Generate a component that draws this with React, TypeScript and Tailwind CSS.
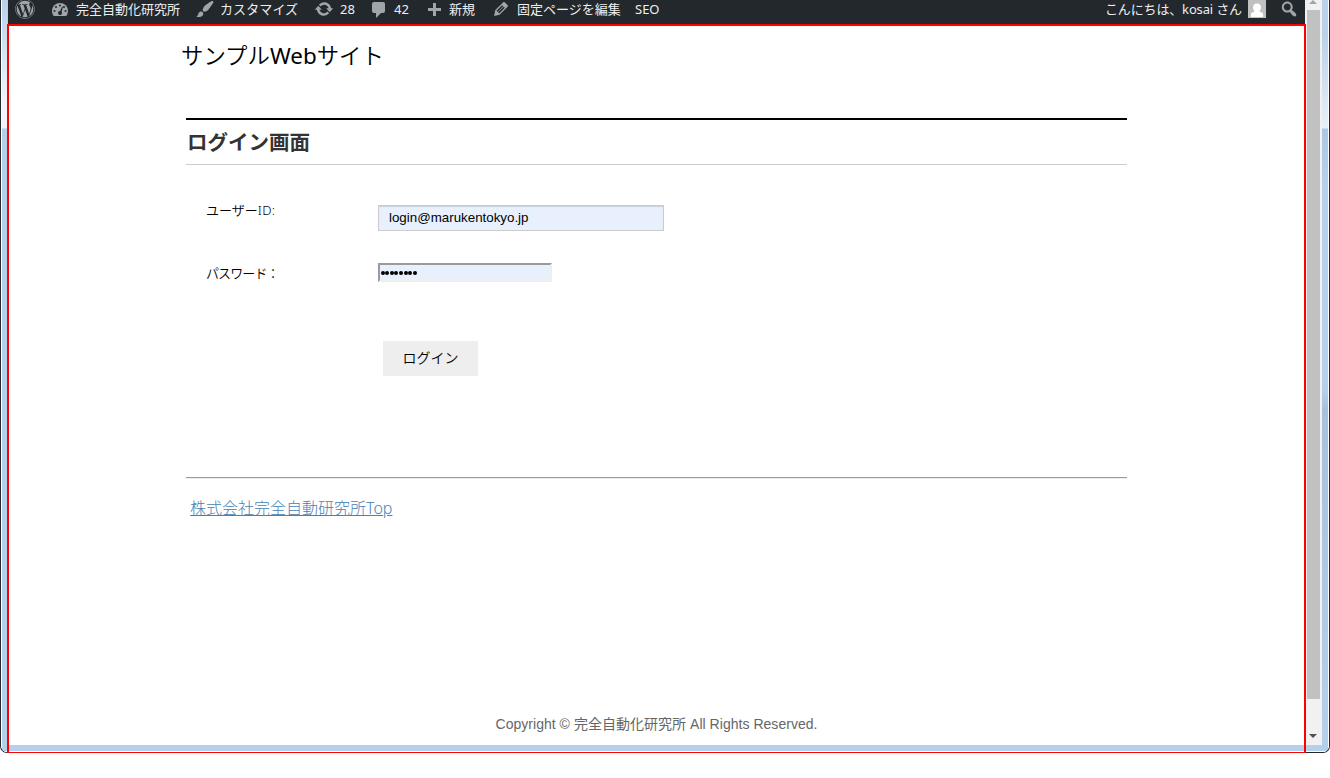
import React from 'react';
import { FaWordpress } from 'react-icons/fa';

const Icon = ({ d, className = '' }: { d: string; className?: string }) => (
  <svg viewBox="0 0 20 20" className={`size-5 shrink-0 ${className}`} fill="#a0a5aa">
    <path d={d} />
  </svg>
);

const BRUSH =
  'M18.33 3.57s.27-.8-.31-1.36c-.53-.52-1.22-.24-1.22-.24-.61.3-5.76 3.47-7.67 5.57-.86.96-2.06 3.79-1.09 4.82.92.98 3.96-.17 4.79-1 2.06-2.06 5.21-7.17 5.5-7.79zM1.4 17.65c2.37-1.56 1.46-3.41 3.23-4.64.93-.65 2.22-.62 3.08.29.63.67.8 2.57-.16 3.46-1.57 1.45-4 1.55-6.15.89z';
const UPDATE =
  'M10.2 3.28c3.53 0 6.43 2.61 6.92 6h2.08l-3.5 4-3.5-4h2.32c-.45-1.97-2.21-3.45-4.32-3.45-1.45 0-2.73.71-3.54 1.78L4.95 5.66C6.23 4.2 8.11 3.28 10.2 3.28zm-.4 13.44c-3.52 0-6.43-2.61-6.92-6H.8l3.5-4c1.17 1.33 2.33 2.67 3.5 4H5.48c.45 1.97 2.21 3.45 4.32 3.45 1.45 0 2.73-.71 3.54-1.78l1.71 1.95c-1.28 1.46-3.15 2.38-5.25 2.38z';
const COMMENT =
  'M5 2h9c1.1 0 2 .9 2 2v7c0 1.1-.9 2-2 2h-2l-5 5v-5H5c-1.1 0-2-.9-2-2V4c0-1.1.9-2 2-2z';
const PLUS = 'M17 7v3h-5v5H9v-5H4V7h5V2h3v5h5z';
const EDIT =
  'M13.89 3.39l2.71 2.72c.46.46.42 1.24.03 1.64l-8.01 8.02-5.56 1.16 1.16-5.58s7.6-7.63 7.99-8.03c.39-.39 1.22-.39 1.68.07zm-2.73 2.79l-5.59 5.61 1.11 1.11 5.54-5.65zm-2.97 8.23l5.58-5.6-1.07-1.08-5.59 5.6z';
const SEARCH =
  'M12.14 4.18c1.87 1.87 2.11 4.75.72 6.89.12.1.22.21.36.31.2.16.47.36.81.59.34.24.56.39.66.47.42.31.73.57.94.78.32.32.6.65.84 1 .25.35.44.69.59 1.04.14.35.21.68.18 1-.02.32-.14.59-.36.81s-.49.34-.81.36c-.31.02-.65-.04-.99-.19-.35-.14-.7-.34-1.04-.59-.35-.24-.68-.52-1-.84-.21-.21-.47-.52-.77-.93-.1-.13-.25-.35-.47-.66-.22-.32-.4-.57-.56-.78-.16-.2-.29-.35-.44-.5-2.07 1.09-4.69.76-6.44-.98-2.14-2.15-2.14-5.64 0-7.78 2.15-2.15 5.63-2.15 7.78 0zm-1.41 6.36c1.36-1.37 1.36-3.58 0-4.95-1.37-1.37-3.59-1.37-4.95 0-1.37 1.37-1.37 3.58 0 4.95 1.36 1.37 3.58 1.37 4.95 0z';

const Gauge = () => (
  <svg viewBox="0 0 20 20" className="size-5 shrink-0">
    <path fill="#a0a5aa" d="M3.76 16h12.48A8.4 8.4 0 0 0 18 11a8 8 0 0 0-16 0c0 1.9.7 3.700 1.760 5z" />
    <g fill="#23282d">
      <circle cx="10" cy="5.500" r="1" />
      <circle cx="6" cy="7" r="1" />
      <circle cx="14" cy="7" r="1" />
      <circle cx="4.5" cy="11" r="1" />
      <circle cx="15.5" cy="11" r="1" />
      <path d="M12.2 6.6l.7.3-1.3 5a1.9 1.9 0 1 1-1.6-.8z" />
    </g>
  </svg>
);

const AdminBar = () => (
  <header className="flex h-6 shrink-0 bg-[#23282d] pr-[5px] pl-[7px] text-[13px] leading-[18px] whitespace-nowrap text-[#eee]">
    <div className="flex w-[35px]">
      <FaWordpress className="-mt-px size-5 text-[#a0a5aa]" />
    </div>
    <div className="flex w-[145px] gap-[6px]">
      <Gauge />
      <span>完全自動化研究所</span>
    </div>
    <div className="flex w-[119px] gap-[5px]">
      <Icon d={BRUSH} className="-mt-px" />
      <span className="tracking-[0.1px]">カスタマイズ</span>
    </div>
    <div className="flex w-[55px] gap-[6px]">
      <Icon d={UPDATE} className="-mt-px" />
      <span>28</span>
    </div>
    <div className="flex w-[55px] gap-[5px]">
      <Icon d={COMMENT} />
      <span>42</span>
    </div>
    <div className="flex w-[67px] gap-[5px]">
      <Icon d={PLUS} className="mt-px" />
      <span>新規</span>
    </div>
    <div className="flex w-[144px] gap-[6px]">
      <Icon d={EDIT} className="-mt-px" />
      <span>固定ページを編集</span>
    </div>
    <span>SEO</span>
    <div className="ml-auto flex">
      <span className="w-[143px] tracking-[-0.15px]">こんにちは、kosai さん</span>
      <svg viewBox="0 0 18 18" className="mr-[13px] size-[18px]">
        <path fill="#c0c0c0" d="M0 0h18v18H0z" />
        <path
          fill="#fff"
          d="M9 3.500a4 4 0 0 0-4 4c0 1.700.8 2.700 1.800 3.500L3 13.500V17h12v-3.500L11.200 11c1-.8 1.800-1.800 1.800-3.500a4 4 0 0 0-4-4z"
        />
      </svg>
      <Icon d={SEARCH} className="mr-px -mt-px" />
    </div>
  </header>
);

const LoginPage = () => (
  <main className="flex h-[719px] shrink-0 flex-col bg-white text-black">
    <h1 className="mt-[14px] ml-[172px] text-[22.4px] leading-8 font-[350]">
      サンプル<span className="font-normal">Web</span>サイト
    </h1>
    <section className="mt-[46px] ml-[177px] w-[941px]">
      <h2 className="h-[47px] border-t-2 border-b border-t-black border-b-[#ccc] pl-px text-[20.5px] leading-[45px] font-bold text-[#333]">
        ログイン画面
      </h2>
      <form className="flex h-[312px] flex-col pl-5 text-[13px]">
        <div className="mt-10 flex h-[26px]">
          <label htmlFor="user" className="w-[172px] leading-[10px] font-[350]">
            ユーザー<span className="tracking-[0.4px]">ID:</span>
          </label>
          <input
            id="user"
            defaultValue="login@marukentokyo.jp"
            className="h-[26px] w-[286px] border border-[#ccc] bg-[#e8f0fe] pb-[2px] pl-[10px] font-['Liberation_Sans',sans-serif] text-[13.33px] shadow-[inset_0_1px_1px_#0002]"
          />
        </div>
        <div className="mt-8 flex h-[19px]">
          <label htmlFor="password" className="w-[172px] leading-[20px] font-[350] tracking-[-0.9px]">
            パスワード：
          </label>
          <div
            id="password"
            className="flex h-[19px] w-[174px] items-center gap-[0.67px] border-2 border-t-[#9a9a9a] border-r-[#eee] border-b-[#eee] border-l-[#9a9a9a] bg-[#e8f0fe] pl-[0.5px]"
          >
            {Array.from({ length: 8 }, (_, i) => (
              <i key={i} className="size-1 rounded-full bg-black" />
            ))}
          </div>
        </div>
        <button type="button" className="mt-[59px] ml-[177px] h-[35px] w-[95px] bg-[#eee] pb-px text-sm font-[350]">
          ログイン
        </button>
      </form>
      <div className="border-t border-b border-t-[#9a9a9a] border-b-[#eee]" />
      <a className="mt-[17px] ml-[4px] block w-fit text-[16px] leading-6 font-light whitespace-nowrap text-[#4682b4] underline">
        株式会社完全自動研究所Top
      </a>
    </section>
    <footer className="mt-auto mb-[10px] pr-px text-center font-['Liberation_Sans','Noto_Sans_CJK_JP',sans-serif] text-sm leading-[22px] tracking-[0.03px] text-[#666]">
      Copyright © 完全自動化研究所 All Rights Reserved.
    </footer>
  </main>
);

export default function App() {
  return (
    <div className="relative h-[778px] overflow-hidden bg-white font-['Noto_Sans','Noto_Sans_CJK_JP',sans-serif]">
      <div className="relative flex h-[753px] overflow-hidden rounded-b-[7px] border-x border-b border-[#23282d] bg-[#b4d0eb]">
        <div className="w-[6px] shrink-0 border-l border-white bg-[linear-gradient(#b9d1ea_0,#f0f4fb_100px,#f0f4fb_128px,#b4cfea_129px,#b4d0eb_100%)]" />
        <div className="ml-px flex w-[1297px] shrink-0 flex-col">
          <AdminBar />
          <div className="pt-[2px] pl-px">
            <LoginPage />
          </div>
        </div>
        <aside className="flex h-[745px] w-[17px] shrink-0 flex-col bg-[#f1f1f1] pl-px">
          <svg viewBox="0 0 14 10" className="h-[10px] w-[14px] shrink-0">
            <path d="M3 4h8L7 0z" fill="#a3a3a3" />
          </svg>
          <div className="ml-px h-[689px] w-[13px] shrink-0 bg-[#c1c1c1]" />
          <svg viewBox="0 0 14 46" className="h-[46px] w-[14px] shrink-0">
            <path d="M3 35h8l-4 4z" fill="#505050" />
          </svg>
        </aside>
        <div className="grow border-r border-white bg-[linear-gradient(#b9d1ea_0,#b9d1ea_35px,#e8f0f8_128px,#a9c6e3_129px,#b4d0eb_180px,#b4d0eb_390px,#a6c1de_410px,#b4d0eb_100%)]" />
        <div className="absolute inset-x-0 bottom-0 h-px bg-white" />
      </div>
      <div className="pointer-events-none absolute top-6 left-[7px] h-[729px] w-[1299px] border-2 border-b border-[#f00]" />
    </div>
  );
}
